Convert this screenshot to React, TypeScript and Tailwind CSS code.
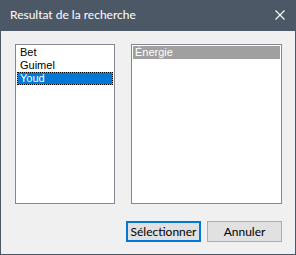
import React from 'react';

const items = ['Bet', 'Guimel', 'Youd'];

export default function App() {
    return (
        <div className="w-[296px] h-[255px] flex flex-col bg-[#4d5866] px-px pb-px">
            {/* Title bar */}
            <div className="h-[31px] flex items-center justify-between pl-[9px] pr-[10px] text-white text-[12px] font-['Lato',sans-serif]">
                <span className="leading-none -mt-[1px]">Resultat de la recherche</span>
                <svg width="10" height="10" viewBox="0 0 10 10" className="-mt-[1px]">
                    <path d="M0.5 0.5L9.5 9.5M9.5 0.5L0.5 9.5" stroke="white" strokeWidth="1.1" />
                </svg>
            </div>

            {/* Client area */}
            <div className="flex-1 bg-[#f0f0f0] flex flex-col pl-[14px] pr-[13px] pt-[13px]">
                <div className="flex gap-[16px] font-['Liberation_Sans',Arial,sans-serif] text-[11px]">
                    <div className="w-[100px] h-[160px] bg-white border border-[#828790] p-px">
                        {items.map((it) =>
                            it === 'Youd' ? (
                                <div key={it} className="bg-[#f08a24]">
                                    <div className="h-[13px] leading-[11px] pl-[2px] bg-[#0078d7] bg-clip-padding border border-dotted border-black text-white">
                                        {it}
                                    </div>
                                </div>
                            ) : (
                                <div key={it} className="h-[13px] leading-[13px] pl-[3px] text-black">
                                    {it}
                                </div>
                            )
                        )}
                    </div>
                    <div className="w-[151px] h-[160px] bg-white border border-[#828790] p-px">
                        <div className="h-[13px] leading-[13px] pl-[2px] bg-[#a0a0a0] text-white">Énergie</div>
                    </div>
                </div>

                <div className="flex justify-end gap-[6px] mt-[17px] font-['Lato',sans-serif] text-[12px] text-black">
                    <button className="w-[75px] h-[21px] bg-[#e1e1e1] border-2 border-[#0078d7] leading-none">
                        Sélectionner
                    </button>
                    <button className="w-[75px] h-[21px] bg-[#e1e1e1] border border-[#adadad] leading-none">
                        Annuler
                    </button>
                </div>
            </div>
        </div>
    );
}
